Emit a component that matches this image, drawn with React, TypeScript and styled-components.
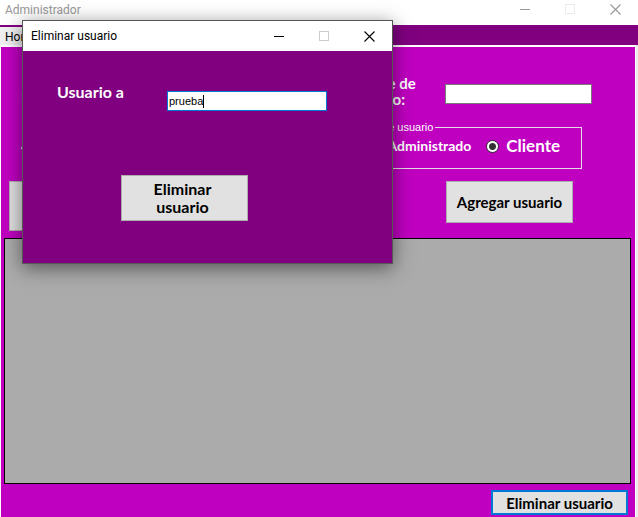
import React, { useState } from "react";
import styled, { createGlobalStyle } from "styled-components";

const geometric = `"Century Gothic", Lato, sans-serif`;
const system = `"Segoe UI", Roboto, sans-serif`;
const small = `"Liberation Sans", Arial, sans-serif`;

const GlobalStyle = createGlobalStyle`
  *, *::before, *::after { box-sizing: border-box; }
  body { margin: 0; background: #fff; overflow: hidden; }
  button, input { font: inherit; }
`;

const MainWindow = styled.main`
  display: flex;
  flex-direction: column;
  min-height: 100vh;
  background: #fff;
`;

const TitleBar = styled.header<{ $inactive?: boolean }>`
  display: flex;
  align-items: center;
  justify-content: space-between;
  height: ${(p) => (p.$inactive ? 25 : 30)}px;
  padding-left: ${(p) => (p.$inactive ? 5 : 8)}px;
  padding-bottom: ${(p) => (p.$inactive ? 6 : 0)}px;
  background: #fff;
  color: ${(p) => (p.$inactive ? "#999" : "#000")};
`;

const Title = styled.h1`
  margin: 0;
  font: 400 12px/16px ${system};
`;

const Controls = styled.div`
  display: flex;
`;

const ControlButton = styled.button`
  display: grid;
  place-items: center;
  width: 45px;
  height: 18px;
  padding: 0;
  border: 0;
  background: none;
  color: inherit;
  &:disabled { color: #ccc; }
`;

const DimControlButton = styled(ControlButton)`
  &:disabled { color: #ebebeb; }
`;

const TabStrip = styled.nav`
  display: flex;
  height: 20px;
  padding-top: 2px;
  background: #800080;
`;

const Tab = styled.button`
  width: 48px;
  padding: 0 0 0 5px;
  border: 0;
  background: #f0f0f0;
  color: #000;
  font: 400 12px/20px ${system};
  text-align: left;
`;

const PageFrame = styled.div`
  display: flex;
  flex: 1;
  background: #ececec;
`;

const Page = styled.section`
  display: flex;
  flex: 1;
  flex-direction: column;
  margin-right: 2px;
  padding: 0 4px 2px 3px;
  border: solid #fff;
  border-width: 2px 1px 0 1px;
  background: #c000c0;
`;

const Form = styled.form`
  display: grid;
  grid-template-columns: 1fr 301px;
  height: 191px;
`;

const LeftFields = styled.div`
  display: flex;
  flex-direction: column;
  align-items: flex-start;
  padding: 42px 0 0 5px;
`;

const FieldLabel = styled.label`
  color: #fff;
  font: 700 15px/16px ${geometric};
`;

const LeftLabel = styled(FieldLabel)`
  margin: 0 0 30px 12px;
`;

const RightFields = styled.div`
  display: flex;
  flex-direction: column;
  padding-top: 28px;
`;

const NameRow = styled.div`
  display: flex;
  align-items: flex-start;
  gap: 28px;
  padding-left: 10px;
`;

const NameLabel = styled(FieldLabel)`
  width: 77px;
  text-align: center;
  white-space: nowrap;
`;

const TextInput = styled.input`
  width: 147px;
  height: 20px;
  padding: 0 2px;
  border: 1px solid #7a7a7a;
  border-radius: 0;
  outline: 0;
  background: #fff;
  color: #000;
  font: 400 11px/16px ${small};
`;

const NameInput = styled(TextInput)`
  margin-top: 9px;
`;

const DialogInput = styled(TextInput)`
  width: 160px;
  padding: 0 1px;
  border-color: #0078d7;
  caret-color: transparent;
`;

const TypeGroup = styled.fieldset`
  display: flex;
  align-items: flex-start;
  justify-content: flex-end;
  gap: 15px;
  width: 252px;
  height: 48px;
  margin: 14px 0 0;
  padding: 3px 21px 0 0;
  border: 1px solid #e6dce6;
  color: #fff;
`;

const TypeLegend = styled.legend`
  margin-left: 25px;
  padding: 0 2px;
  font: 400 11px/13px ${small};
`;

const RadioLabel = styled.label<{ $large?: boolean }>`
  display: flex;
  align-items: center;
  gap: 7px;
  font: 700 ${(p) => (p.$large ? 17 : 14)}px/18px ${geometric};
`;

const Radio = styled.input`
  appearance: none;
  width: 13px;
  height: 13px;
  margin: 0;
  border: 1px solid #333;
  border-radius: 50%;
  background: #fff;
  &:checked {
    background: radial-gradient(circle, #333 0 3px, #fff 4px);
  }
`;

const PushButton = styled.button<{ $width: number; $height: number; $focused?: boolean }>`
  width: ${(p) => p.$width}px;
  height: ${(p) => p.$height}px;
  padding: 0 4px;
  border: ${(p) => (p.$focused ? "2px solid #0078d7" : "1px solid #adadad")};
  border-radius: 0;
  background: #e1e1e1;
  color: #000;
  font: 700 15px/18px ${geometric};
`;

const AddRow = styled.div`
  display: flex;
  padding: 12px 0 0 116px;
`;

const DataArea = styled.div`
  flex: 1;
  min-height: 120px;
  border: 1px solid #000;
  background: #ababab;
`;

const Footer = styled.footer`
  display: flex;
  justify-content: flex-end;
  padding: 6px 3px 0 0;
`;

const Dialog = styled.section`
  position: absolute;
  top: 20px;
  left: 22px;
  width: 371px;
  border: 1px solid #565656;
  background: #800080;
  box-shadow: 0 4px 18px rgba(0, 0, 0, 0.5);
`;

const DialogForm = styled.form`
  display: flex;
  flex-direction: column;
  gap: 64px;
  padding: 33px 34px 42px;
`;

const DialogRow = styled.div`
  display: flex;
  align-items: flex-start;
`;

const DialogLabel = styled(FieldLabel)`
  width: 110px;
  font-size: 16px;
`;

const InputWrap = styled.div`
  position: relative;
  display: flex;
  padding-top: 7px;
`;

const Caret = styled.span`
  position: absolute;
  top: 11px;
  left: 36px;
  width: 1px;
  height: 13px;
  background: #000;
`;

const DialogAction = styled.div`
  display: flex;
  padding-left: 64px;
`;

const WrappedButton = styled(PushButton)`
  padding: 0 30px 0 26px;
  font-size: 16px;
`;

function WindowControls({ dim }: { dim?: boolean }) {
  const Control = dim ? DimControlButton : ControlButton;
  return (
    <Controls>
      <Control type="button" aria-label="Minimizar">
        <svg width="11" height="11" shapeRendering="crispEdges"><path d="M0 5.5h10" stroke="currentColor" /></svg>
      </Control>
      <Control type="button" aria-label="Maximizar" disabled>
        <svg width="11" height="11" shapeRendering="crispEdges"><path d="M.5.5h9v9h-9z" fill="none" stroke="currentColor" /></svg>
      </Control>
      <Control type="button" aria-label="Cerrar">
        <svg width="11" height="11"><path d="M.5.5l10 10M10.5.5l-10 10" stroke="currentColor" strokeWidth="1.1" /></svg>
      </Control>
    </Controls>
  );
}

export default function App() {
  const [user, setUser] = useState("prueba");
  const [kind, setKind] = useState("cliente");
  return (
    <>
      <GlobalStyle />
      <MainWindow>
        <TitleBar $inactive>
          <Title>Administrador</Title>
          <WindowControls dim />
        </TitleBar>
        <TabStrip><Tab type="button">Home</Tab></TabStrip>
        <PageFrame>
          <Page>
            <Form onSubmit={(e) => e.preventDefault()}>
              <LeftFields>
                <LeftLabel as="span">Nombre:</LeftLabel>
                <LeftLabel as="span">Apellido:</LeftLabel>
                <PushButton type="button" $width={127} $height={50} aria-label="Usuarios" />
              </LeftFields>
              <RightFields>
                <NameRow>
                  <NameLabel htmlFor="username">Nombre de<br />usuario:</NameLabel>
                  <NameInput id="username" />
                </NameRow>
                <TypeGroup>
                  <TypeLegend>Tipo de usuario</TypeLegend>
                  <RadioLabel>
                    <Radio type="radio" name="kind" checked={kind === "admin"} onChange={() => setKind("admin")} />
                    Administrado
                  </RadioLabel>
                  <RadioLabel $large>
                    <Radio type="radio" name="kind" checked={kind === "cliente"} onChange={() => setKind("cliente")} />
                    Cliente
                  </RadioLabel>
                </TypeGroup>
                <AddRow><PushButton $width={127} $height={42}>Agregar usuario</PushButton></AddRow>
              </RightFields>
            </Form>
            <DataArea />
            <Footer><PushButton type="button" $width={137} $height={25} $focused>Eliminar usuario</PushButton></Footer>
          </Page>
        </PageFrame>
      </MainWindow>
      <Dialog role="dialog" aria-labelledby="dialog-title">
        <TitleBar>
          <Title as="h2" id="dialog-title">Eliminar usuario</Title>
          <WindowControls />
        </TitleBar>
        <DialogForm onSubmit={(e) => e.preventDefault()}>
          <DialogRow>
            <DialogLabel htmlFor="target">Usuario a</DialogLabel>
            <InputWrap>
              <DialogInput id="target" value={user} onChange={(e) => setUser(e.target.value)} />
              <Caret />
            </InputWrap>
          </DialogRow>
          <DialogAction><WrappedButton $width={127} $height={46}>Eliminar usuario</WrappedButton></DialogAction>
        </DialogForm>
      </Dialog>
    </>
  );
}
